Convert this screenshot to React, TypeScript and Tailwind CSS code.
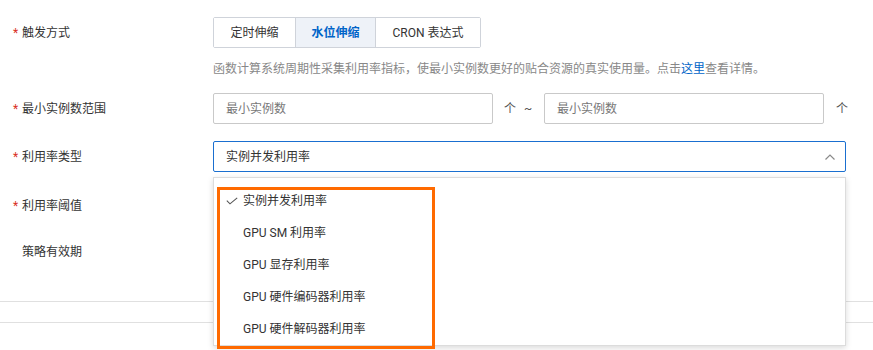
import React from "react";

const font = { fontFamily: 'Roboto, "Noto Sans CJK SC", sans-serif' };

function Label({ text, required = true }: { text: string; required?: boolean }) {
  return (
    <div className="w-[213px] shrink-0 pl-[13px] flex items-center text-[12px] text-[#333]">
      <span className="w-[9px] text-[#d93026]">{required ? "*" : ""}</span>
      <span>{text}</span>
    </div>
  );
}

export default function App() {
  const items = ["实例并发利用率", "GPU SM 利用率", "GPU 显存利用率", "GPU 硬件编码器利用率", "GPU 硬件解码器利用率"];
  return (
    <div className="relative w-[873px] h-[350px] bg-white overflow-hidden" style={font}>
      <div className="pt-[17px]">
        {/* Row 1 */}
        <div className="flex h-[31px]">
          <Label text="触发方式" />
          <div className="flex border border-[#cfd3da] rounded-[2px] text-[12px] text-[#333]">
            <div className="w-[81px] flex items-center justify-center bg-white">定时伸缩</div>
            <div className="w-[81px] flex items-center justify-center bg-[#eef2f8] border-x border-[#cfd3da] text-[#0064c8] font-bold">水位伸缩</div>
            <div className="w-[104px] flex items-center justify-center bg-white">CRON 表达式</div>
          </div>
        </div>
        <div className="ml-[213px] mt-[13px] text-[12px] leading-[16px] text-[#888]">
          函数计算系统周期性采集利用率指标，使最小实例数更好的贴合资源的真实使用量。点击<span className="text-[#0064c8]">这里</span>查看详情。
        </div>
        {/* Row 2 */}
        <div className="flex h-[31px] mt-[16px]">
          <Label text="最小实例数范围" />
          <div className="w-[280px] border border-[#c9c9c9] rounded-[2px] flex items-center pl-[12px] text-[12px] text-[#777]">最小实例数</div>
          <div className="w-[51px] flex items-center text-[12px] text-[#555]">
            <span className="ml-[11px]">个</span>
            <span className="ml-[8px]">~</span>
          </div>
          <div className="w-[280px] border border-[#c9c9c9] rounded-[2px] flex items-center pl-[12px] text-[12px] text-[#777]">最小实例数</div>
          <div className="flex items-center text-[12px] text-[#555] ml-[12px]">个</div>
        </div>
        {/* Row 3 */}
        <div className="flex h-[31px] mt-[17px]">
          <Label text="利用率类型" />
          <div className="w-[633px] border border-[#1a6fd0] rounded-[2px] flex items-center justify-between pl-[12px] pr-[9px] text-[12px] text-[#333]">
            <span>实例并发利用率</span>
            <svg width="12" height="8" viewBox="0 0 12 8" fill="none" stroke="#8a8a8a" strokeWidth="1.2">
              <path d="M1.5 6.5 L6 2 L10.5 6.5" />
            </svg>
          </div>
        </div>
        {/* Row 4 */}
        <div className="flex h-[31px] mt-[18px]">
          <Label text="利用率阈值" />
        </div>
        {/* Row 5 */}
        <div className="flex h-[31px] mt-[15px]">
          <Label text="策略有效期" required={false} />
        </div>
        <div className="mt-[34px] border-t border-[#e0e0e0] h-[21px]" />
        <div className="border-t border-[#e0e0e0]" />
      </div>

      {/* Dropdown */}
      <div className="absolute left-[213px] top-[177px] w-[633px] h-[169px] bg-white border border-[#dcdcdc] shadow-[0_2px_6px_rgba(0,0,0,0.15)] pt-[7px]">
        {items.map((t, i) => (
          <div key={t} className="h-[32px] flex items-center text-[12px] text-[#333]">
            <div className="w-[29px] flex justify-end pr-[5px]">
              {i === 0 && (
                <svg width="12" height="8" viewBox="0 0 12 8" fill="none" stroke="#555" strokeWidth="1.1">
                  <path d="M0.8 3.6 L4 6.8 L11.2 0.8" />
                </svg>
              )}
            </div>
            <span>{t}</span>
          </div>
        ))}
      </div>

      {/* Highlight */}
      <div className="absolute left-[217px] top-[187px] w-[218px] h-[162px] border-[3px] border-[#ff6a00]" />
    </div>
  );
}
